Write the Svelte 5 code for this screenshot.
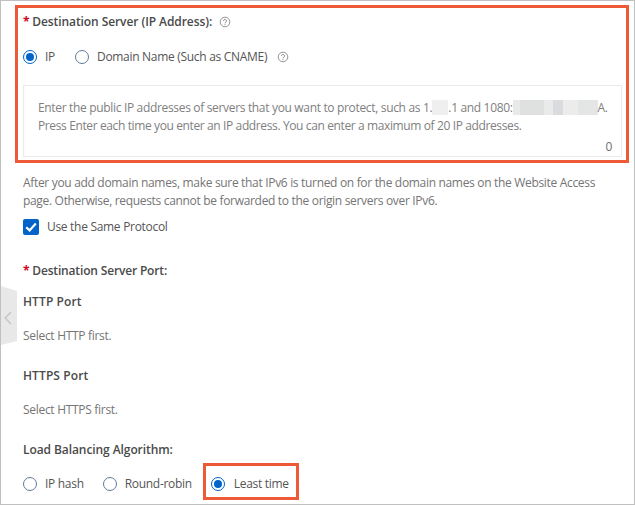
<script>
  const rows = [];
</script>

{#snippet help()}
  <svg class="help" width="12" height="12" viewBox="0 0 12 12" aria-hidden="true">
    <circle cx="6" cy="6" r="4.8" fill="none" stroke="#8a8a8a" stroke-width="0.9" />
    <path d="M4.5 4.9a1.5 1.5 0 1 1 2.3 1.3c-.5.3-.8.5-.8 1.1" fill="none" stroke="#777" stroke-width="0.9" />
    <circle cx="6" cy="8.8" r=".55" fill="#777" />
  </svg>
{/snippet}

<div class="window">
  <div class="sidetab" aria-hidden="true">
    <svg width="10" height="14" viewBox="0 0 10 14"><path d="M8 1 2.2 7 8 13" fill="none" stroke="#c8c8c8" stroke-width="1.7" /></svg>
  </div>

  <section class="highlight top">
    <div class="label"><span class="req">*</span> <b>Destination Server (IP Address):</b>{@render help()}</div>
    <div class="radios first">
      <label class="radio"><span class="dot on"></span>IP</label>
      <label class="radio dn"><span class="dot"></span>Domain Name (Such as CNAME){@render help()}</label>
    </div>
    <div class="area">
      <p><span class="l1">Enter the public IP addresses of servers that you want to protect, such as 1.<span class="blur short"></span>.1 and 1080:<span class="blur long"></span>A.</span><br />Press Enter each time you enter an IP address. You can enter a maximum of 20 IP addresses.</p>
      <span class="count">0</span>
    </div>
  </section>

  <p class="note">After you add domain names, make sure that IPv6 is turned on for the domain names on the Website Access page. Otherwise, requests cannot be forwarded to the origin servers over IPv6.</p>

  <label class="check">
    <span class="box">
      <svg width="16" height="16" viewBox="0 0 16 16"><path d="M3.2 8.2 6.6 11.4 12.8 4.6" fill="none" stroke="#fff" stroke-width="2.2" /></svg>
    </span>
    Use the Same Protocol
  </label>

  <div class="label port"><span class="req">*</span> <b>Destination Server Port:</b></div>

  <h4 class="h-http">HTTP Port</h4>
  <p class="hint">Select HTTP first.</p>
  <h4 class="h-https">HTTPS Port</h4>
  <p class="hint">Select HTTPS first.</p>

  <h4 class="h-lb">Load Balancing Algorithm:</h4>
  <div class="radios last">
    <label class="radio"><span class="dot"></span>IP hash</label>
    <label class="radio rr"><span class="dot"></span>Round-robin</label>
    <label class="radio lt"><span class="dot on"></span>Least time</label>
  </div>
</div>

<style>
  :global(body) { margin: 0; background: #fff; }
  * { box-sizing: border-box; }
  .window {
    position: relative;
    width: 635px;
    height: 505px;
    overflow: hidden;
    padding: 4px 6px 0 15px;
    border: 1px solid #c0c0c0;
    font: 12px/18px "Open Sans", sans-serif;
    letter-spacing: -0.3px;
    color: #555;
  }
  b, h4 { font-weight: 600; color: #4a4a4a; letter-spacing: -0.08px; }
  p, h4 { margin: 0; font-size: 12px; }
  .req { color: #d0021b; font-weight: 700; }
  .highlight.top {
    margin-left: -1px;
    width: 614px;
    height: 158px;
    border: 3px solid #ee5a38;
    padding: 0 5px;
  }
  .label { display: flex; align-items: center; gap: 3px; height: 18px; }
  .top .label { margin-top: 5px; }
  .help { flex: none; }
  .label .help { margin-left: 4px; }
  .radio .help { margin-left: 2px; }
  .radios { display: flex; align-items: center; }
  .radio { display: flex; align-items: center; gap: 8px; color: #555; }
  .radios.first { margin-top: 17px; }
  .dn { margin-left: 20px; }
  .dot {
    width: 14px; height: 14px; border-radius: 50%;
    border: 1px solid #5f7a99; background: #fff; flex: none; position: relative;
  }
  .dot.on { border-color: #0064c8; }
  .dot.on::after {
    content: ""; position: absolute; inset: 2px; border-radius: 50%; background: #0064c8;
  }
  .area {
    position: relative;
    margin-top: 19px;
    width: 599px;
    height: 72px;
    border: 1px solid #ebebeb;
    padding: 13px 14px;
    color: #808080;
    letter-spacing: -0.38px;
  }
  .area p { white-space: nowrap; }
  .l1 { letter-spacing: -0.33px; }
  .blur { display: inline-block; height: 15px; vertical-align: -3px; }
  .short { width: 16px; background: #efefef; }
  .long {
    width: 85px;
    background: linear-gradient(90deg, #e9e9e9 0 8%, #dfe0e0 8% 36%, #ebeaea 36% 47%, #dadbde 47% 59%, #ececec 59% 76%, #e4e5e5 76% 100%);
  }
  .count { position: absolute; right: 9px; bottom: 0; color: #6e6e6e; }
  .note { margin: 11px 0 0 7px; width: 590px; color: #757575; letter-spacing: -0.32px; }
  .check { display: flex; align-items: center; gap: 8px; margin: 8px 0 0 7px; color: #555; }
  .box { width: 16px; height: 16px; border-radius: 2px; background: #0064c8; display: block; flex: none; }
  .box svg { display: block; }
  .label.port { margin: 26px 0 0 7px; }
  .port b { letter-spacing: -0.16px; }
  h4, .hint { margin-left: 7px; }
  .h-http { margin-top: 13px; letter-spacing: 0.1px; }
  .hint { margin-top: 16px; color: #757575; }
  .h-https { margin-top: 22px; letter-spacing: 0.1px; }
  .h-lb { margin-top: 22px; }
  .radios.last { margin: 16px 0 0 7px; }
  .rr { margin-left: 19px; }
  .lt {
    position: relative;
    margin-left: 19px;
    gap: 9px;
  }
  .lt::before {
    content: ""; box-sizing: border-box; position: absolute; left: -8px; top: -12px; width: 96px; height: 37px;
    border: 3px solid #ee5a38;
  }
  .sidetab {
    position: absolute; left: 0; top: 285px; width: 16px; height: 59px;
    background: #e8e8e8;
    clip-path: polygon(0 0, 100% 5px, 100% 55px, 0 100%);
    display: flex; align-items: center; justify-content: flex-start;
    padding: 4px 0 0 2px;
  }
  .sidetab svg { display: block; }
</style>
